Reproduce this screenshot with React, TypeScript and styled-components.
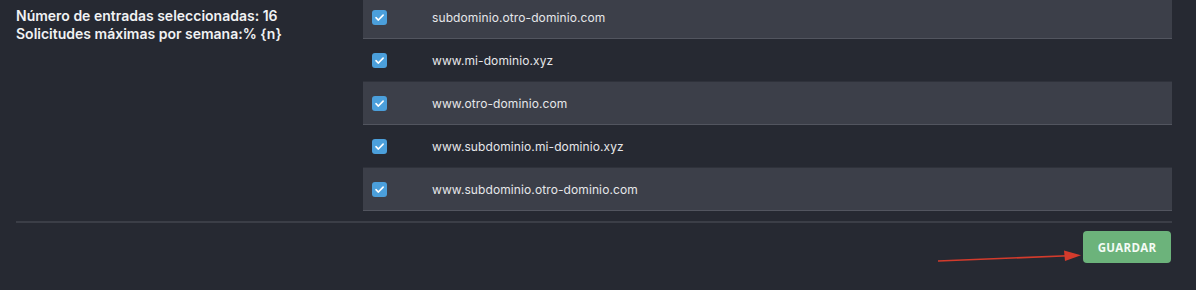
import React from 'react';
import styled, { createGlobalStyle } from 'styled-components';

const GlobalStyle = createGlobalStyle`
  html, body {
    margin: 0;
    padding: 0;
    background: #262932;
    overflow: hidden;
  }
`;

const Page = styled.div`
  font-family: Inter, 'Open Sans', sans-serif;
  color: #e8e9ec;
  padding: 0 24px 0 16px;
  height: 290px;
  box-sizing: border-box;
`;

const Top = styled.div`
  display: flex;
`;

const Summary = styled.div`
  width: 347px;
  flex-shrink: 0;
  padding-top: 7px;
  font-size: 14px;
  font-weight: 600;
  line-height: 18px;
  color: #f1f2f4;
`;

const Table = styled.div`
  flex: 1;
  margin-top: -4px;
`;

const Row = styled.div<{ $shaded: boolean }>`
  display: flex;
  align-items: center;
  height: 42px;
  border-bottom: 1px solid ${({ $shaded }) => ($shaded ? '#52555f' : '#2f323b')};
  background: ${({ $shaded }) => ($shaded ? '#3c3f49' : 'transparent')};
`;

const CheckCell = styled.div`
  width: 69px;
  padding-left: 9px;
  box-sizing: border-box;
  display: flex;
  align-items: center;
`;

const Box = styled.span`
  width: 15px;
  height: 15px;
  border-radius: 3px;
  background: #4b9fdb;
  display: inline-flex;
  align-items: center;
  justify-content: center;
`;

const Domain = styled.span`
  font-size: 12px;
  color: #e6e7ea;
  letter-spacing: 0.1px;
`;

const Divider = styled.div`
  height: 2px;
  background: #3b3e47;
  margin-top: 10px;
`;

const Footer = styled.div`
  position: relative;
  display: flex;
  justify-content: flex-end;
  padding-top: 8px;
  padding-right: 1px;
`;

const SaveButton = styled.button`
  width: 88px;
  height: 32px;
  border: none;
  border-radius: 4px;
  background: #6cb37b;
  color: #f4fbf5;
  font-family: 'Open Sans', sans-serif;
  font-weight: 700;
  font-size: 11.5px;
  letter-spacing: 0.3px;
  padding: 0;
`;

const Arrow = styled.svg`
  position: absolute;
  left: 918px;
  top: 26px;
  overflow: visible;
`;

const domains = [
  'subdominio.otro-dominio.com',
  'www.mi-dominio.xyz',
  'www.otro-dominio.com',
  'www.subdominio.mi-dominio.xyz',
  'www.subdominio.otro-dominio.com',
];

const Check = () => (
  <Box>
    <svg width="11" height="11" viewBox="0 0 10 10">
      <path d="M1.8 5.2 L4 7.3 L8.3 2.8" fill="none" stroke="#fff" strokeWidth="1.5" strokeLinecap="round" strokeLinejoin="round" />
    </svg>
  </Box>
);

const App: React.FC = () => (
  <>
    <GlobalStyle />
    <Page>
      <Top>
        <Summary>
          Número de entradas seleccionadas: 16
          <br />
          Solicitudes máximas por semana:% {'{n}'}
        </Summary>
        <Table>
          {domains.map((d, i) => (
            <Row key={d} $shaded={i % 2 === 0}>
              <CheckCell>
                <Check />
              </CheckCell>
              <Domain>{d}</Domain>
            </Row>
          ))}
        </Table>
      </Top>
      <Divider />
      <Footer>
        <Arrow width="150" height="20">
          <path d="M4 12 L140 6.5" stroke="#d33b2c" strokeWidth="1.6" fill="none" />
          <path d="M130 1.5 L147 6.3 L131 12 Z" fill="#d33b2c" />
        </Arrow>
        <SaveButton>GUARDAR</SaveButton>
      </Footer>
    </Page>
  </>
);

export default App;
